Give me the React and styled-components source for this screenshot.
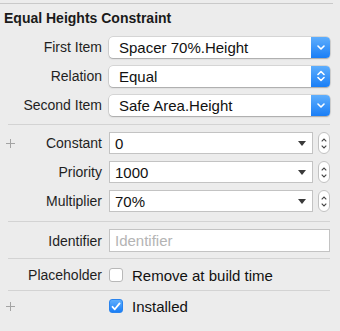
import React from 'react';
import styled, { createGlobalStyle } from 'styled-components';

const GlobalStyle = createGlobalStyle`
  html, body {
    margin: 0;
    padding: 0;
    background: #ececec;
  }
  body {
    font-family: 'Liberation Sans', Arial, sans-serif;
    color: #000;
  }
`;

const Panel = styled.div`
  width: 340px;
  height: 331px;
  background: #ececec;
  padding-top: 3px;
  box-sizing: border-box;
`;

const TopRule = styled.div`
  height: 1px;
  background: #c9c9c9;
  margin-right: 7px;
`;

const Title = styled.h2`
  margin: 6px 0 0 4px;
  font-size: 14px;
  line-height: 17px;
  font-weight: 700;
  color: #1a1a1a;
`;

const Section = styled.div`
  display: flex;
  flex-direction: column;
  gap: ${(p) => p.$gap ?? 7}px;
  padding-top: ${(p) => p.$top ?? 7}px;
  padding-bottom: ${(p) => p.$bottom ?? 7}px;
`;

const Separator = styled.div`
  height: 1px;
  background: #d3d3d3;
  margin: 0 10px 0 8px;
`;

const Row = styled.div`
  display: flex;
  align-items: center;
  height: ${(p) => p.$h ?? 22}px;
  padding-right: 10px;
`;

const Gutter = styled.div`
  width: 20px;
  height: 100%;
  display: flex;
  align-items: center;
  justify-content: center;
  padding-left: 1px;
  box-sizing: border-box;
`;

const Label = styled.div`
  width: 82px;
  margin-right: 7px;
  text-align: right;
  font-size: 14px;
  color: #1f1f1f;
  white-space: nowrap;
`;

const Popup = styled.div`
  flex: 1;
  height: 21px;
  display: flex;
  align-items: stretch;
  background: #fff;
  border-radius: 4px;
  box-shadow: 0 0 0 0.5px rgba(0, 0, 0, 0.18), 0 1px 1.5px rgba(0, 0, 0, 0.22);
  overflow: hidden;
`;

const PopupText = styled.div`
  flex: 1;
  padding-left: 10px;
  font-size: 15px;
  line-height: 21px;
  color: #111;
  white-space: nowrap;
`;

const BlueCap = styled.div`
  width: 19px;
  display: flex;
  align-items: center;
  justify-content: center;
  background: linear-gradient(#5eaefd, #1a7ef6);
`;

const Combo = styled.div`
  flex: 1;
  height: ${(p) => p.$h ?? 22}px;
  box-sizing: border-box;
  display: flex;
  align-items: center;
  background: #fff;
  border: 1px solid #c3c3c3;
  padding: 0 6px 0 5px;
`;

const ComboText = styled.div`
  flex: 1;
  font-size: 15px;
  color: ${(p) => (p.$placeholder ? '#b4b4b4' : '#111')};
  white-space: nowrap;
`;

const Triangle = styled.div`
  width: 0;
  height: 0;
  border-left: 4px solid transparent;
  border-right: 4px solid transparent;
  border-top: 5px solid #3a3a3a;
  margin-top: 1px;
`;

const Stepper = styled.div`
  width: 12px;
  height: 22px;
  margin-left: 5px;
  box-sizing: border-box;
  border: 1px solid #c2c2c2;
  border-radius: 6px;
  background: #fff;
  display: flex;
  flex-direction: column;
  align-items: center;
  justify-content: center;
  gap: 3px;
`;

const CheckRow = styled.label`
  display: flex;
  align-items: center;
  gap: 9px;
  font-size: 15px;
  color: #111;
`;

const Box = styled.div`
  width: 14px;
  height: 14px;
  box-sizing: border-box;
  border-radius: 3px;
  display: flex;
  align-items: center;
  justify-content: center;
  background: ${(p) => (p.$checked ? 'linear-gradient(#5eaefd, #1a7ef6)' : '#fff')};
  border: ${(p) => (p.$checked ? '1px solid #2a84ee' : '1px solid #b8b8b8')};
`;

const Plus = () => (
  <svg width="9" height="9" viewBox="0 0 9 9">
    <path d="M4.5 0v9M0 4.5h9" stroke="#a3a3a3" strokeWidth="1" />
  </svg>
);

const ChevronDown = () => (
  <svg width="8" height="5" viewBox="0 0 8 5">
    <path d="M1 1l3 3 3-3" fill="none" stroke="#fff" strokeWidth="1.6" strokeLinecap="round" strokeLinejoin="round" />
  </svg>
);

const ChevronUpDown = () => (
  <svg width="8" height="12" viewBox="0 0 8 12">
    <path d="M1 4.5l3-3 3 3M1 7.5l3 3 3-3" fill="none" stroke="#fff" strokeWidth="1.6" strokeLinecap="round" strokeLinejoin="round" />
  </svg>
);

const Tick = ({ up }) => (
  <svg width="6" height="4" viewBox="0 0 6 4">
    <path d={up ? 'M0.7 3.3L3 1l2.3 2.3' : 'M0.7 0.7L3 3l2.3-2.3'} fill="none" stroke="#444" strokeWidth="1.1" />
  </svg>
);

const CheckMark = () => (
  <svg width="10" height="9" viewBox="0 0 10 9">
    <path d="M1.5 4.8l2.3 2.5L8.6 1.4" fill="none" stroke="#fff" strokeWidth="1.8" strokeLinecap="round" strokeLinejoin="round" />
  </svg>
);

const PopupField = ({ label, value, updown }) => (
  <Row>
    <Gutter />
    <Label>{label}</Label>
    <Popup>
      <PopupText>{value}</PopupText>
      <BlueCap>{updown ? <ChevronUpDown /> : <ChevronDown />}</BlueCap>
    </Popup>
  </Row>
);

const ComboField = ({ label, value, plus }) => (
  <Row>
    <Gutter>{plus && <Plus />}</Gutter>
    <Label>{label}</Label>
    <Combo>
      <ComboText>{value}</ComboText>
      <Triangle />
    </Combo>
    <Stepper>
      <Tick up />
      <Tick />
    </Stepper>
  </Row>
);

export default function App() {
  return (
    <>
      <GlobalStyle />
      <Panel>
        <TopRule />
        <Title>Equal Heights Constraint</Title>
        <Section $top={9} $bottom={8}>
          <PopupField label="First Item" value="Spacer 70%.Height" />
          <PopupField label="Relation" value="Equal" updown />
          <PopupField label="Second Item" value="Safe Area.Height" />
        </Section>
        <Separator />
        <Section $top={7} $bottom={9}>
          <ComboField label="Constant" value="0" plus />
          <ComboField label="Priority" value="1000" />
          <ComboField label="Multiplier" value="70%" />
        </Section>
        <Separator />
        <Section $top={7} $bottom={6}>
          <Row $h={23}>
            <Gutter />
            <Label>Identifier</Label>
            <Combo $h={23}>
              <ComboText $placeholder>Identifier</ComboText>
            </Combo>
          </Row>
        </Section>
        <Separator />
        <Section $top={6} $bottom={5}>
          <Row $h={20}>
            <Gutter />
            <Label>Placeholder</Label>
            <CheckRow>
              <Box />
              Remove at build time
            </CheckRow>
          </Row>
        </Section>
        <Separator />
        <Section $top={5} $bottom={5}>
          <Row $h={20}>
            <Gutter>
              <Plus />
            </Gutter>
            <Label />
            <CheckRow>
              <Box $checked>
                <CheckMark />
              </Box>
              Installed
            </CheckRow>
          </Row>
        </Section>
      </Panel>
    </>
  );
}
